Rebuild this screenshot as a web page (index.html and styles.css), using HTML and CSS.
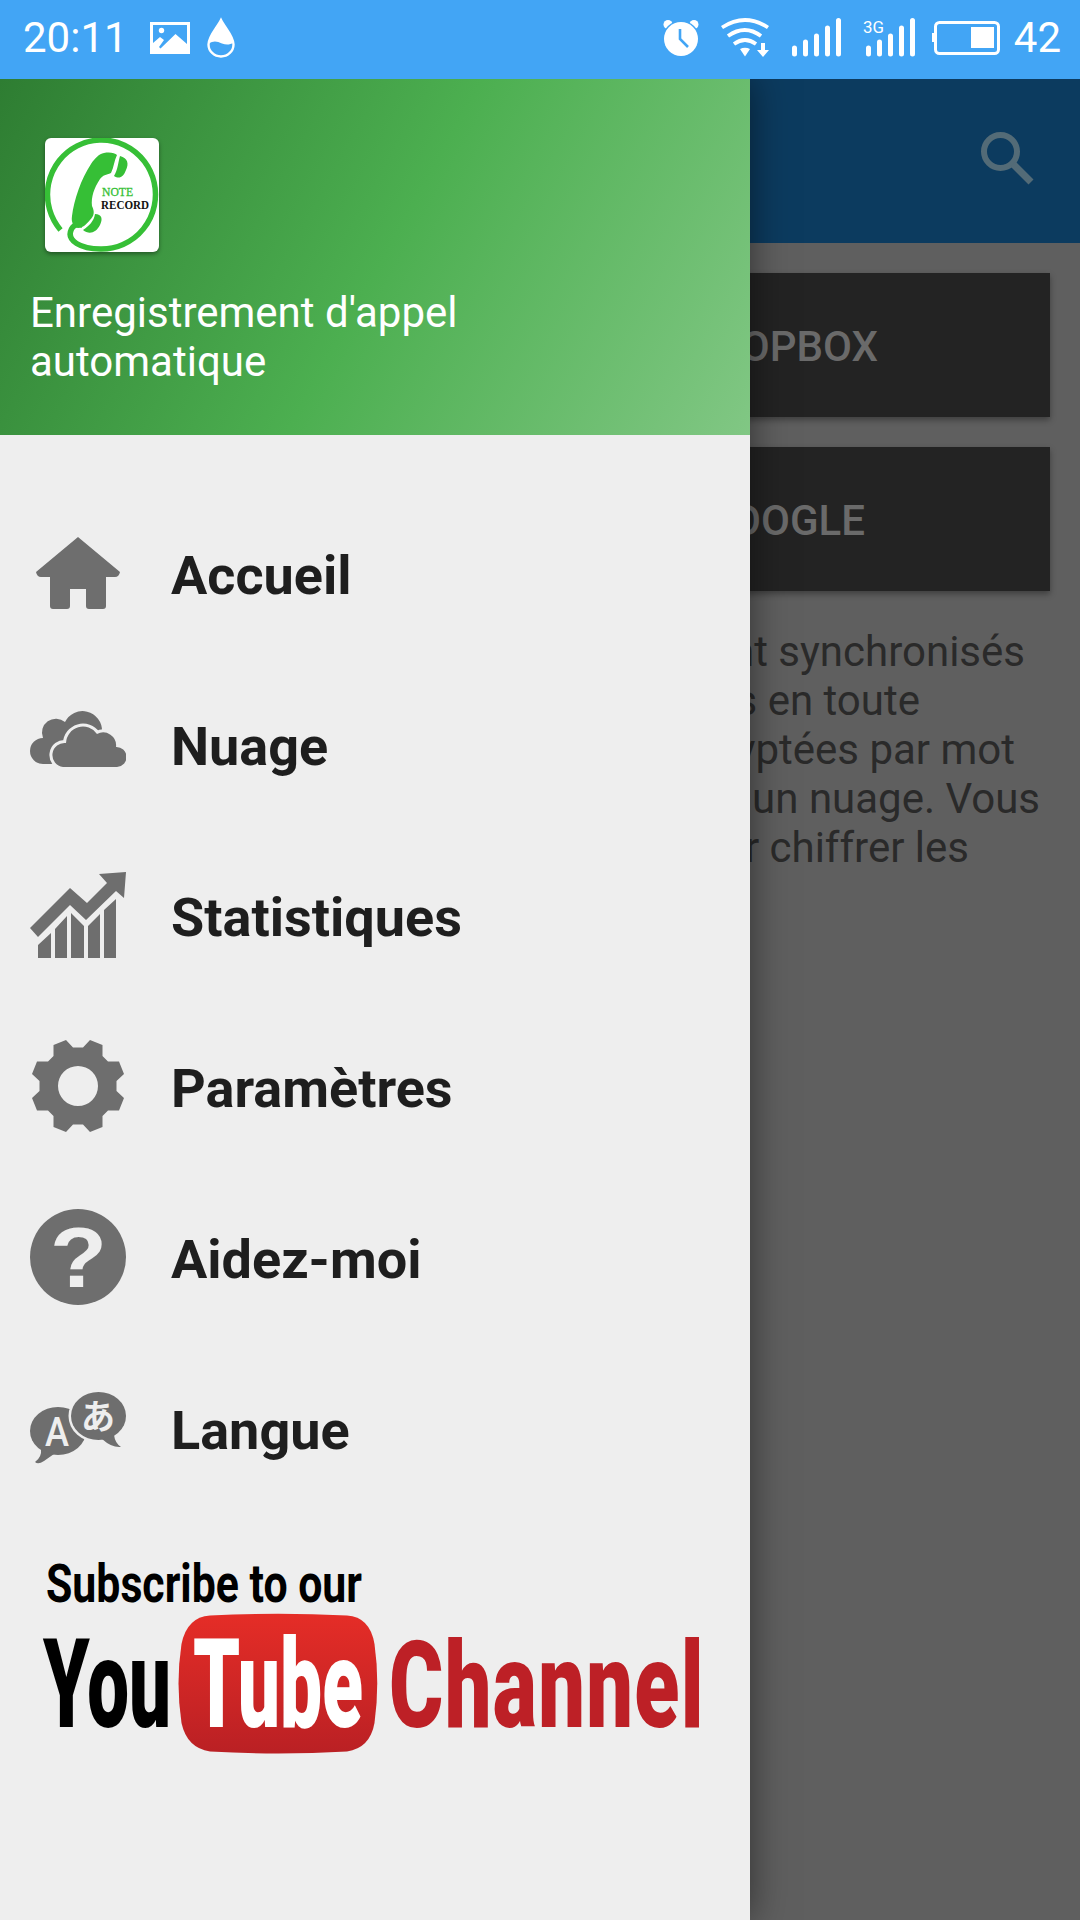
FILE: index.html
```html
<!DOCTYPE html>
<html lang="fr">
<head>
    <meta charset="UTF-8">
    <meta name="viewport" content="width=device-width, initial-scale=1.0">
    <title>Enregistrement d'appel automatique</title>
    <link rel="stylesheet" href="styles.css">
</head>
<body>

<div class="status-bar">
    <span class="time">20:11</span>
    <svg class="icon-photo" width="40" height="32" viewBox="0 0 40 32">
        <path fill="#fff" fill-rule="evenodd" d="M0 0H40V32H0ZM3 3V21L10 15L14 18L9 25L10.500 26.500L25.500 12L37 22V3Z"/>
        <circle cx="11.500" cy="8.500" r="2.700" fill="#fff"/>
    </svg>
    <svg class="icon-drop" width="28" height="42" viewBox="0 0 28 42">
        <path d="M14 3C10 11 1.500 19 1.500 27.500A12.500 12 0 0 0 26.500 27.500C26.500 19 18 11 14 3Z" fill="none" stroke="#fff" stroke-width="2.400"/>
        <path d="M14 2C10 11 1.500 19 1.500 27C7 23 10 24.500 15 26.500C19 28 23 28 26.500 25.500C26 18 18 11 14 2Z" fill="#fff"/>
    </svg>

    <div class="status-right">
        <svg width="36" height="38" viewBox="0 0 36 38">
            <circle cx="5" cy="5.500" r="4.500" fill="#fff"/>
            <circle cx="31" cy="5.500" r="4.500" fill="#fff"/>
            <circle cx="18" cy="20" r="18.500" fill="#42a5f5"/>
            <circle cx="18" cy="20" r="17" fill="#fff"/>
            <path d="M17 10V20L25 28" fill="none" stroke="#42a5f5" stroke-width="2.600"/>
        </svg>
        <svg class="icon-wifi" width="48" height="40" viewBox="0 0 48 40">
            <g fill="none" stroke="#fff" stroke-width="3.800">
                <path d="M1 9.500Q24 -5.500 47 9.500"/>
                <path d="M7 18Q24 6 40 18"/>
                <path d="M13 26Q24 18 35 26"/>
            </g>
            <path d="M19 31Q24 28.500 29 31L24 38.500Z" fill="#fff"/>
            <path d="M40 25H44V32H48L42 39L36 32H40Z" fill="#fff"/>
        </svg>
        <svg class="icon-signal" width="50" height="40" viewBox="0 0 50 40">
            <path d="M2.500 30V36M13.500 24V36M24.500 18V36M35.500 10V36M46.500 2.500V36" stroke="#fff" stroke-width="5" stroke-linecap="round"/>
        </svg>
        <svg class="icon-3g" width="54" height="40" viewBox="0 0 54 40">
            <text x="1" y="15" class="net" textLength="21" lengthAdjust="spacingAndGlyphs">3G</text>
            <path d="M6.500 30V36M17.500 24V36M28.500 18V36M39.500 10V36M50.500 2.500V36" stroke="#fff" stroke-width="5" stroke-linecap="round"/>
        </svg>
        <svg class="icon-battery" width="68" height="34" viewBox="0 0 68 34">
            <rect x="3.500" y="1.500" width="63" height="31" rx="4" fill="none" stroke="#fff" stroke-width="3"/>
            <rect x="0" y="12" width="3" height="9" fill="#fff"/>
            <rect x="39" y="6" width="23" height="21" fill="#fff"/>
        </svg>
        <span class="percent">42</span>
    </div>
</div>

<div class="screen">
    <!-- page under the drawer -->
    <div class="app-bar">
        <svg width="54" height="54" viewBox="0 0 54 54">
            <circle cx="20.500" cy="20.500" r="16.500" fill="none" stroke="#536b77" stroke-width="6"/>
            <path d="M33 33L51 51" stroke="#536b77" stroke-width="7"/>
        </svg>
    </div>
    <div class="content">
        <div class="cloud-button dropbox">DROPBOX</div>
        <div class="cloud-button google">GOOGLE</div>
        <div class="info">
            <p class="line-1">nt synchronisés</p>
            <p class="line-2">s en toute</p>
            <p class="line-3">yptées par mot</p>
            <p class="line-4">un nuage. Vous</p>
            <p class="line-5">r chiffrer les</p>
        </div>
    </div>

    <div class="drawer">
        <div class="drawer-header">
            <svg class="logo" width="114" height="114" viewBox="0 0 114 114">
                <path d="M17 92A54 54.500 0 1 1 57 111C38 111 22 103 28 91Q31 85 39 87" fill="none" stroke="#36bf36" stroke-width="5.500" transform="translate(-1.500 0)"/>
                <path d="M59 15C65 14 70 15 72 17C69 23 69 29 66 35C61 37 58 37 55 41C49 50 46 59 47 68C50 74 49 78 45 82C41 87 37 90 33 90C28 88 26 84 27 78C29 62 36 41 46 26C50 20 54 16 59 15Z" fill="#36bf36"/>
                <path d="M75 18C83 20 84 26 81 32C78 40 74 41 69 38C73 31 73 25 75 18Z" fill="#36bf36"/>
                <path d="M50 76C57 76 58 81 55 87C51 95 44 97 38 92C44 88 49 83 50 76Z" fill="#36bf36"/>
                <text x="57" y="58" class="logo-note" textLength="31" lengthAdjust="spacingAndGlyphs">NOTE</text>
                <text x="56" y="71" class="logo-record" textLength="48" lengthAdjust="spacingAndGlyphs">RECORD</text>
            </svg>
            <div class="app-name">Enregistrement d'appel<br>automatique</div>
        </div>

        <div class="menu">
            <div class="menu-item">
                <svg class="menu-icon" viewBox="0 0 96 96">
                    <path d="M48 12L90 47Q89 52 85 52H76V81Q76 84 73 84H59Q56 84 56 81V64H40V81Q40 84 37 84H23Q20 84 20 81V52H11Q7 52 6 47Z"/>
                </svg>
                <span>Accueil</span>
            </div>
            <div class="menu-item">
                <svg class="menu-icon" viewBox="0 0 96 96">
                    <path d="M13 68A13 13 0 0 1 13 42A14 14 0 0 1 35 26A19.500 19.500 0 0 1 72 35L60 68Z"/>
                    <path class="cloud-front" d="M33 71A12 12 0 0 1 36 47A17 17 0 0 1 67 38A13 13 0 0 1 86 51A10 10 0 0 1 87 71Z"/>
                </svg>
                <span>Nuage</span>
            </div>
            <div class="menu-item">
                <svg class="menu-icon" viewBox="0 0 96 96">
                    <path d="M0 61L40 21L57 36L77 16L69 7L96 5L94 31L86 24L56 53L40 38L8 70Z"/>
                    <path d="M8 91V78L21 66V91ZM25 91V62L37 49V91ZM41 91V46L54 59V91ZM58 91V59L70 47V91ZM74 91V43L86 32V91Z"/>
                </svg>
                <span>Statistiques</span>
            </div>
            <div class="menu-item">
                <svg class="menu-icon" viewBox="0 0 96 96">
                    <path fill-rule="evenodd" stroke-linejoin="round" d="M23.500 7L36 2L43 9.500H53L60 2L72.500 7V18L78 23.500H89L94 36L86.500 43V53L94 60L89 72.500H78L72.500 78V89L60 94L53 86.500H43L36 94L23.500 89V78L18 72.500H7L2 60L9.500 53V43L2 36L7 23.500H18L23.500 18ZM48 28A20 20 0 1 0 48 68A20 20 0 1 0 48 28Z"/>
                </svg>
                <span>Paramètres</span>
            </div>
            <div class="menu-item">
                <svg class="menu-icon" viewBox="0 0 96 96">
                    <circle cx="48" cy="48" r="48"/>
                    <text x="20" y="78" class="question" textLength="57" lengthAdjust="spacingAndGlyphs">?</text>
                </svg>
                <span>Aidez-moi</span>
            </div>
            <div class="menu-item">
                <svg class="menu-icon" viewBox="0 0 96 96">
                    <ellipse cx="28" cy="51" rx="28" ry="24"/>
                    <path d="M11 69Q12 77 5 82Q8 85 14 81L24 74Z"/>
                    <ellipse cx="68.500" cy="36" rx="30" ry="26.500" class="bubble-gap"/>
                    <ellipse cx="68.500" cy="36" rx="27.500" ry="24"/>
                    <path d="M72 59Q82 68 91 67Q85 63 84 55Z"/>
                    <text x="15" y="66" class="letter-a" textLength="24" lengthAdjust="spacingAndGlyphs">A</text>
                    <text x="51" y="49" class="letter-ja">あ</text>
                </svg>
                <span>Langue</span>
            </div>
        </div>

        <svg class="youtube" width="750" height="240" viewBox="0 0 750 240">
            <defs>
                <linearGradient id="tube-red" x1="0" y1="0" x2="0" y2="1">
                    <stop offset="0" stop-color="#e52d27"/>
                    <stop offset="1" stop-color="#ba2024"/>
                </linearGradient>
            </defs>
            <path d="M210 75.500Q278 72 347 75.500Q370 77 374.500 104Q380 143 374.500 183Q370 208 347 211.500Q278 215.500 210 211.500Q187 208 181.500 183Q175.500 143 181.500 104Q187 77 210 75.500Z" fill="url(#tube-red)"/>
            <text x="46" y="61.500" class="subscribe" textLength="316" lengthAdjust="spacingAndGlyphs">Subscribe to our</text>
            <text x="43" y="187" class="yt you" textLength="128" lengthAdjust="spacingAndGlyphs">You</text>
            <text x="193" y="187" class="yt tube" textLength="170" lengthAdjust="spacingAndGlyphs">Tube</text>
            <text x="389" y="187" class="yt channel" textLength="316" lengthAdjust="spacingAndGlyphs">Channel</text>
        </svg>
    </div>
</div>

</body>
</html>
```
FILE: styles.css
```css
body {
    margin: 0;
    width: 1080px;
    height: 1920px;
    overflow: hidden;
    font-family: Roboto, "Noto Sans CJK JP", sans-serif;
    background: #5f5f5f;
}

svg {
    display: block;
    flex-shrink: 0;
}

/* Status bar */
.status-bar {
    display: flex;
    align-items: center;
    box-sizing: border-box;
    height: 79px;
    padding: 0 19px 4px 23px;
    background: #42a5f5;
    color: white;
    font-size: 42px;
}

.time {
    width: 127px;
}

.icon-drop {
    margin-left: 17px;
}

.status-right {
    display: flex;
    align-items: center;
    margin-left: auto;
}

.icon-wifi {
    margin-left: 22px;
}

.icon-signal {
    margin-left: 23px;
}

.icon-3g {
    margin-left: 20px;
    overflow: visible;
}

.net {
    font-size: 17px;
    fill: white;
}

.icon-battery {
    margin-left: 16px;
}

.percent {
    margin-left: 14px;
}

/* Page */
.screen {
    position: relative;
    height: 1841px;
}

.app-bar {
    display: flex;
    align-items: center;
    justify-content: flex-end;
    box-sizing: border-box;
    height: 164px;
    padding: 0 46px 6px 0;
    background: #0c3b5f;
}

.content {
    padding: 30px;
}

.cloud-button {
    height: 144px;
    margin-bottom: 30px;
    line-height: 148px;
    text-align: right;
    box-sizing: border-box;
    background: #232323;
    color: #6a6a6a;
    font-size: 42px;
    font-weight: 500;
    box-shadow: 0 3px 6px rgba(0, 0, 0, 0.35);
}

.dropbox {
    padding-right: 172px;
}

.google {
    padding-right: 185px;
}

.info {
    padding-top: 6px;
    color: #2a2a2a;
    font-size: 42px;
    line-height: 49px;
    text-align: right;
}

.info p {
    margin: 0;
}

.line-1 {
    padding-right: 25px;
}

.line-2 {
    padding-right: 130px;
}

.line-3 {
    padding-right: 35px;
}

.line-4 {
    padding-right: 10px;
}

.line-5 {
    padding-right: 81px;
}

/* Drawer, slides over the page */
.drawer {
    position: absolute;
    top: 0;
    left: 0;
    width: 750px;
    height: 1841px;
    background: #eeeeee;
    box-shadow: 0 0 36px rgba(0, 0, 0, 0.5);
    clip-path: inset(0 -60px 0 0);
}

.drawer-header {
    box-sizing: border-box;
    height: 356px;
    padding: 59px 30px 0;
    background: linear-gradient(119deg, #2e7d32, #4caf50 51%, #81c784);
}

.logo {
    margin-left: 15px;
    background: white;
    border-radius: 6px;
    box-shadow: 0 2px 4px rgba(0, 0, 0, 0.4);
}

.logo-note,
.logo-record {
    font-family: "Liberation Serif", serif;
    font-size: 12px;
    fill: #36bf36;
}

.logo-note {
    stroke: #36bf36;
    stroke-width: 0.3px;
}

.logo-record {
    font-weight: bold;
    fill: #111;
}

.app-name {
    margin-top: 36px;
    color: white;
    font-size: 42px;
    line-height: 49px;
}

.menu {
    padding-top: 52px;
}

.menu-item {
    display: flex;
    align-items: center;
    gap: 45px;
    height: 171px;
    padding-left: 30px;
    color: #1e1e1e;
    font-size: 54px;
    font-weight: bold;
}

.menu-item span {
    padding-top: 6px;
}

.menu-icon {
    width: 96px;
    height: 96px;
    fill: #6e6e6e;
}

.cloud-front {
    stroke: #eeeeee;
    stroke-width: 6px;
    paint-order: stroke;
}

.bubble-gap {
    fill: #eeeeee;
}

.question,
.letter-a,
.letter-ja {
    fill: #eeeeee;
}

.question {
    font-family: "Liberation Sans", sans-serif;
    font-size: 86px;
}

.letter-a {
    font-size: 40px;
    font-weight: 500;
}

.letter-ja {
    font-family: "Noto Sans CJK JP", sans-serif;
    font-size: 34px;
    font-weight: 700;
}

.youtube {
    margin-top: 27px;
}

.subscribe,
.yt {
    font-family: Roboto, sans-serif;
    font-weight: bold;
}

.subscribe {
    font-size: 53px;
}

.yt {
    font-size: 125px;
    font-weight: 900;
}

.tube {
    fill: white;
}

.channel {
    font-size: 121px;
    letter-spacing: 2px;
    fill: #bd2026;
}
```
